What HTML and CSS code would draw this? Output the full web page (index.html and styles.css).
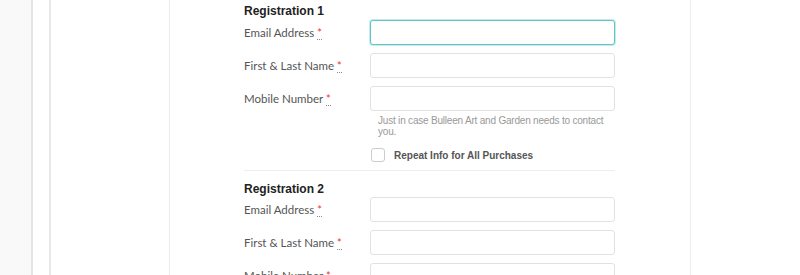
FILE: index.html
```html
<!DOCTYPE html>
<html>
<head>
<meta charset="utf-8">
<link rel="stylesheet" href="styles.css">
</head>
<body>
<div class="sidebar"></div>
<div class="gutter"></div>
<div class="main">
  <div class="card">
    <span class="stray">*</span>
    <form class="form">
      <section class="reg">
        <h3 class="reg-title">Registration 1</h3>
        <div class="row">
          <label class="label">Email Address <abbr class="req">*</abbr></label>
          <input class="input focused" type="text">
        </div>
        <div class="row">
          <label class="label">First &amp; Last Name <abbr class="req">*</abbr></label>
          <input class="input" type="text">
        </div>
        <div class="row">
          <label class="label">Mobile Number <abbr class="req">*</abbr></label>
          <div class="field">
            <input class="input" type="text">
            <p class="help">Just in case Bulleen Art and Garden needs to contact you.</p>
          </div>
        </div>
        <div class="row check-row">
          <span></span>
          <label class="check"><span class="box"></span><span class="check-text">Repeat Info for All Purchases</span></label>
        </div>
      </section>
      <section class="reg second">
        <h3 class="reg-title">Registration 2</h3>
        <div class="row">
          <label class="label">Email Address <abbr class="req">*</abbr></label>
          <input class="input" type="text">
        </div>
        <div class="row">
          <label class="label">First &amp; Last Name <abbr class="req">*</abbr></label>
          <input class="input" type="text">
        </div>
        <div class="row">
          <label class="label">Mobile Number <abbr class="req">*</abbr></label>
          <input class="input" type="text">
        </div>
      </section>
    </form>
  </div>
</div>
</body>
</html>
```
FILE: styles.css
```css
html, body {
  margin: 0;
  padding: 0;
  height: 275px;
  overflow: hidden;
  background: #fff;
}
body {
  display: flex;
  font-family: "Liberation Sans", Arial, sans-serif;
}
.sidebar {
  width: 31px;
  background: #f9f9f9;
  border-right: 2px solid #e4e4e4;
  flex: none;
}
.gutter {
  width: 16px;
  border-right: 2px solid #e8e8e8;
  flex: none;
}
.main {
  flex: 1;
  padding-left: 118px;
  padding-right: 109px;
  display: flex;
}
.card {
  flex: 1;
  position: relative;
  border-left: 1px solid #ececec;
  border-right: 1px solid #ececec;
  padding-left: 74px;
}
.stray {
  position: absolute;
  left: 345px;
  top: -9px;
  color: #e88;
  font-size: 11px;
}
.form {
  width: 371px;
  margin: 0;
}
.reg-title {
  margin: 4px 0 2px;
  font-size: 12px;
  line-height: 14px;
  font-weight: bold;
  color: #222;
}
.reg.second {
  border-top: 1px solid #eee;
  margin-top: 8px;
  padding-top: 7px;
}
.reg.second .reg-title {
  margin-bottom: 1px;
}
.row {
  display: grid;
  grid-template-columns: 126px 1fr;
  align-items: start;
  margin-bottom: 8px;
}
.label {
  font-family: Lato, "Open Sans", sans-serif;
  font-size: 11.5px;
  color: #555;
  line-height: 25px;
}
.req {
  color: #e33;
  text-decoration: none;
  border-bottom: 1px dotted #888;
  font-size: 11px;
}
.input {
  box-sizing: border-box;
  height: 25px;
  width: 100%;
  border: 1px solid #e2e2e2;
  border-radius: 3px;
  background: #fff;
  margin: 0;
  padding: 0 6px;
}
.input.focused {
  border: 1px solid #5cc6c9;
  box-shadow: 0 0 0 1px rgba(92, 198, 201, 0.35);
}
.help {
  margin: 4px 0 0;
  padding-left: 8px;
  font-size: 10px;
  letter-spacing: -0.2px;
  line-height: 11px;
  color: #999;
}
.check-row {
  margin-bottom: 0;
}
.check {
  display: flex;
  align-items: center;
  gap: 9px;
  margin-top: 3px;
}
.box {
  box-sizing: border-box;
  width: 14px;
  height: 14px;
  border: 1px solid #ccc;
  border-radius: 3px;
  background: #fff;
  margin-left: 1px;
}
.check-text {
  font-size: 10px;
  font-weight: bold;
  color: #555;
}
```
